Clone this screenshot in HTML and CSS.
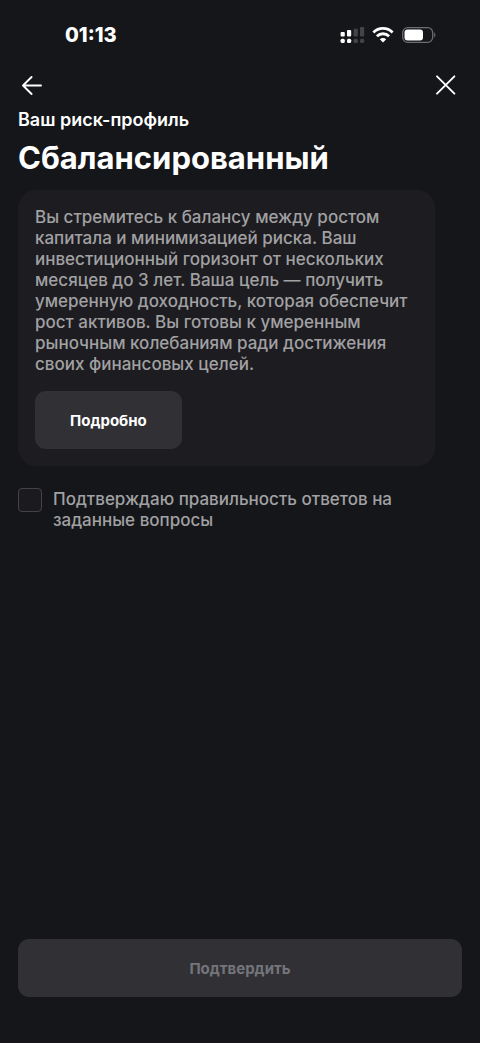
FILE: index.html
```html
<!DOCTYPE html>
<html lang="ru">
<head>
    <meta charset="UTF-8">
    <meta name="viewport" content="width=device-width, initial-scale=1">
    <title>Ваш риск-профиль</title>
    <link rel="stylesheet" href="styles.css">
</head>
<body>
    <div class="screen">
        <div class="status-bar">
            <span class="time">01:13</span>
            <div class="status-icons">
                <svg width="24" height="18" viewBox="0 0 24 18" fill="#fff">
                    <rect x="0.600" y="6" width="4.200" height="4.400" rx="1"/>
                    <rect x="7" y="4" width="4.200" height="6.400" rx="1"/>
                    <rect x="0.600" y="12.700" width="4.200" height="4.300" rx="1.500"/>
                    <rect x="7" y="12.700" width="4.200" height="4.300" rx="1.500"/>
                    <g fill="#434447">
                        <rect x="13.600" y="2.700" width="4.200" height="7.700" rx="1"/>
                        <rect x="20" y="1" width="4.200" height="9.400" rx="1"/>
                        <rect x="13.600" y="12.700" width="4.200" height="4.300" rx="1.500"/>
                        <rect x="20" y="12.700" width="4.200" height="4.300" rx="1.500"/>
                    </g>
                </svg>
                <svg width="22" height="18" viewBox="0 0 22 18" fill="none" stroke="#fff" stroke-width="2.800">
                    <path d="M1.400 6.400a13.600 13.600 0 0 1 19.200 0"/>
                    <path d="M4.900 10.300a8.600 8.600 0 0 1 12.200 0"/>
                    <path d="M11 16.600l-3.200-3.300a4.500 4.500 0 0 1 6.400 0z" fill="#fff" stroke="none"/>
                </svg>
                <svg width="34" height="18" viewBox="0 0 34 18">
                    <rect x="0.700" y="1.700" width="30" height="14.600" rx="5" fill="none" stroke="#6c6d70" stroke-width="1.300"/>
                    <rect x="2.500" y="3.500" width="18.500" height="11" rx="3" fill="#fff"/>
                    <path d="M32.200 6.600c1.600.6 1.600 4.200 0 4.800z" fill="#6c6d70"/>
                </svg>
            </div>
        </div>

        <header class="nav">
            <button type="button" class="icon-btn" aria-label="Назад">
                <svg width="28" height="28" viewBox="0 0 28 28" fill="none" stroke="#fff" stroke-width="1.900">
                    <path d="M23 14.500H5M13.600 6L5 14.500l8.600 8.500" stroke-linecap="round" stroke-linejoin="round"/>
                </svg>
            </button>
            <button type="button" class="icon-btn" aria-label="Закрыть">
                <svg width="28" height="28" viewBox="0 0 28 28" fill="none" stroke="#fff" stroke-width="1.900">
                    <path d="M5 5.300L22.400 22.700M22.400 5.300L5 22.700" stroke-linecap="round"/>
                </svg>
            </button>
        </header>

        <main class="content">
            <p class="subtitle">Ваш риск-профиль</p>
            <h1 class="title">Сбалансированный</h1>

            <section class="card">
                <p class="card-text">Вы стремитесь к балансу между ростом капитала и минимизацией риска. Ваш инвестиционный горизонт от нескольких месяцев до 3 лет. Ваша цель — получить умеренную доходность, которая обеспечит рост активов. Вы готовы к умеренным рыночным колебаниям ради достижения своих финансовых целей.</p>
                <button type="button" class="btn details-btn">Подробно</button>
            </section>

            <div class="agree">
                <input type="checkbox" id="agree" class="checkbox">
                <label for="agree" class="agree-label">Подтверждаю правильность ответов на заданные вопросы</label>
            </div>
        </main>

        <footer class="bottom">
            <button type="button" class="btn submit-btn" disabled>Подтвердить</button>
        </footer>
    </div>
</body>
</html>
```
FILE: styles.css
```css
* {
    box-sizing: border-box;
}

body {
    margin: 0;
    background-color: #15161a;
    color: #fff;
    font-family: Inter, "Noto Sans", sans-serif;
}

button {
    border: 0;
    padding: 0;
    font-family: inherit;
    cursor: pointer;
}

.screen {
    display: flex;
    flex-direction: column;
    min-height: 100vh;
}

.status-bar {
    display: flex;
    align-items: center;
    justify-content: space-between;
    height: 70px;
    padding: 0 44px 0 65px;
}

.time {
    font-size: 20px;
    font-weight: 800;
}

.status-icons {
    display: flex;
    gap: 8px;
}

.status-icons svg {
    overflow: visible;
}

.nav {
    display: flex;
    justify-content: space-between;
    padding: 1px 20px 0 18px;
}

.icon-btn {
    display: flex;
    background: none;
}

.content {
    flex: 1;
    padding: 10px 18px;
}

.subtitle {
    margin: 0;
    font-size: 18px;
    font-weight: 600;
    line-height: 22px;
}

.title {
    margin: 8px 0 13px;
    font-size: 31px;
    font-weight: 700;
    line-height: 38px;
}

.card {
    margin-right: 27px;
    padding: 17px;
    border-radius: 18px;
    background-color: #1d1c20;
}

.card-text {
    margin: 0 0 16px;
    color: #a1a1a3;
    font-size: 17px;
    font-weight: 500;
    line-height: 21px;
}

.btn {
    height: 58px;
    border-radius: 11px;
    background-color: #313035;
    color: #fff;
    font-size: 15px;
    font-weight: 700;
}

.details-btn {
    padding: 0 35px;
}

.agree {
    display: flex;
    align-items: flex-start;
    gap: 11px;
    margin: 22px 27px 0 0;
}

.checkbox {
    flex: none;
    appearance: none;
    width: 24px;
    height: 24px;
    margin: 0;
    border: 1px solid #444448;
    border-radius: 4px;
    background-color: #1b1b1f;
}

.checkbox:checked {
    background-color: #a1a1a3;
}

.agree-label {
    padding-top: 1px;
    color: #a1a1a3;
    font-size: 17px;
    font-weight: 500;
    line-height: 21px;
}

.bottom {
    padding: 0 18px 46px;
}

.submit-btn {
    width: 100%;
    color: #74757b;
    cursor: default;
}
```
